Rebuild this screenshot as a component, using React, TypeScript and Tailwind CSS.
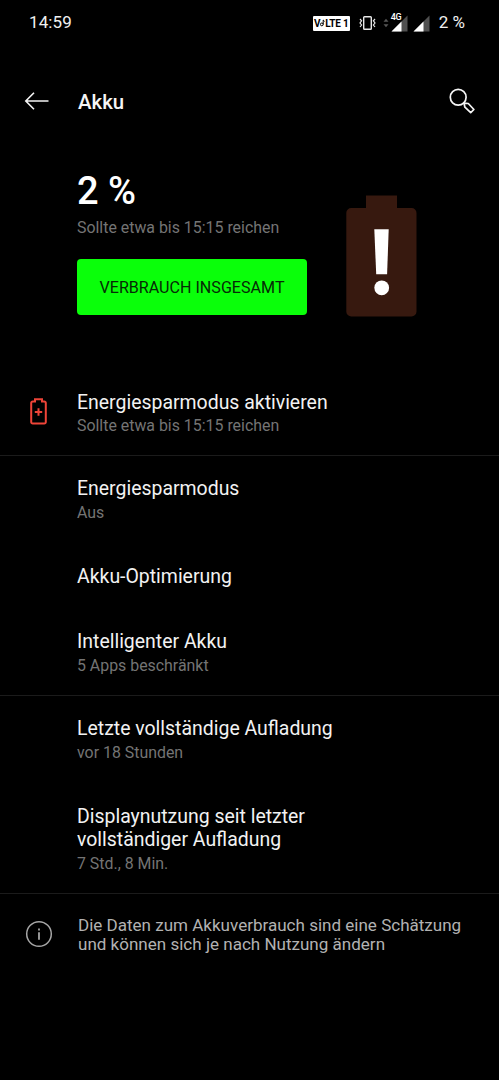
import clsx from "clsx";

interface SettingItem {
  title: string;
  summary?: string;
}

const modeItems: SettingItem[] = [
  { title: "Energiesparmodus", summary: "Aus" },
  { title: "Akku-Optimierung" },
  { title: "Intelligenter Akku", summary: "5 Apps beschränkt" },
];

const usageItems: SettingItem[] = [
  { title: "Letzte vollständige Aufladung", summary: "vor 18 Stunden" },
  {
    title: "Displaynutzung seit letzter vollständiger Aufladung",
    summary: "7 Std., 8 Min.",
  },
];

function StatusBar() {
  return (
    <div className="flex h-[46px] items-center pl-[29px] pr-[34px] text-[17px] text-[#f0f0f0]">
      <span className="tracking-[0.1px]">14:59</span>
      <div className="ml-auto flex items-center">
        <span className="flex h-[15px] w-[37px] items-center justify-center rounded-[1px] bg-white text-[10px] leading-[15px] font-bold tracking-[-0.2px] whitespace-nowrap text-black">
          V
          <svg width="5" height="8" viewBox="0 0 5 8" fill="none" stroke="black" strokeWidth="1">
            <circle cx="1.8" cy="5.4" r="1.4" />
            <path d="M3.2 5.4V1l1.4 1.4" />
          </svg>
          LTE&nbsp;1
        </span>
        <svg className="ml-[9px]" width="17" height="16" viewBox="0 0 17 16" fill="none" stroke="#e8e8e8">
          <rect x="4.7" y="1.7" width="7.6" height="12.6" rx="0.8" strokeWidth="1.4" />
          <path d="M1 4l1.6 1.8L1 8l1.6 2L1 12M16 4l-1.6 1.8L16 8l-1.6 2 1.6 2" strokeWidth="1.2" />
        </svg>
        <svg className="ml-[7px]" width="6" height="10" viewBox="0 0 6 10" fill="#555">
          <path d="M3 0.8l2.5 3h-5zM3 9.2l2.5-3h-5z" />
        </svg>
        <div className="relative ml-[2px]">
          <Signal />
          <span className="absolute -top-[2px] left-0 text-[9px] leading-[9px] font-medium tracking-[-0.3px] text-white">
            4G
          </span>
        </div>
        <div className="ml-[5px]">
          <Signal />
        </div>
        <span className="ml-[9px]">2 %</span>
      </div>
    </div>
  );
}

function Signal() {
  return (
    <svg className="block" width="17" height="17" viewBox="0 0 17 17">
      <path d="M0.5 16.5L16.5 0.5v16z" fill="#505050" />
      <path d="M0.5 16.5l10-10v10z" fill="white" />
    </svg>
  );
}

function BatteryWarning() {
  return (
    <svg className="mt-[13px] ml-[39px] shrink-0" width="71" height="122" viewBox="0 0 71 122">
      <path
        d="M20 0.5h31v12.5h14.5a5 5 0 0 1 5 5v98.5a5 5 0 0 1-5 5H5.3a5 5 0 0 1-5-5V18a5 5 0 0 1 5-5H20z"
        fill="#37190f"
      />
      <path d="M28.3 34.3h14.4l-1.6 45H30.2z" fill="white" />
      <circle cx="35.7" cy="92.8" r="7.4" fill="white" />
    </svg>
  );
}

function SettingRow({ title, summary }: SettingItem) {
  return (
    <div className="pt-[22px] pr-[150px] pb-[20px] pl-[77px] first:pt-[21px] first:pb-[21px]">
      <div className="text-[19.45px] leading-[23px] text-[#f2f2f2]">{title}</div>
      {summary && (
        <div className="mt-[3px] text-[15.9px] leading-[19px] text-[#747474]">{summary}</div>
      )}
    </div>
  );
}

function SettingGroup({ items, className }: { items: SettingItem[]; className?: string }) {
  return (
    <div className={clsx("border-b border-[#1b1b1b]", className)}>
      {items.map((item) => (
        <SettingRow key={item.title} {...item} />
      ))}
    </div>
  );
}

export default function App() {
  return (
    <div className="h-[1080px] w-[499px] overflow-hidden bg-black font-[Roboto,sans-serif]">
      <StatusBar />

      <header className="flex h-[112px] items-center pr-[23px] pl-[24px]">
        <svg className="-mt-[2px]" width="26" height="20" viewBox="0 0 26 20" fill="none" stroke="#f5f5f5" strokeWidth="1.6">
          <path d="M24.5 10H2M10 1.8L1.8 10l8.2 8.2" />
        </svg>
        <h1 className="ml-[28px] text-[20.4px] leading-[24px] font-medium text-[#f5f5f5]">Akku</h1>
        <svg className="ml-auto" width="28" height="28" viewBox="0 0 28 28" fill="none" stroke="#f5f5f5" strokeWidth="1.7">
          <circle cx="10.2" cy="9.2" r="7.9" />
          <path d="M16 15.2l4.3 0.3 5.6 6-3.2 3.2-5.8-5.5z" strokeLinejoin="round" />
        </svg>
      </header>

      <section className="flex h-[212px] pt-[24px] pl-[77px]">
        <div className="w-[230px] shrink-0">
          <div className="h-[36px] text-[38px] leading-[18px] font-medium text-white">2 %</div>
          <div className="text-[15.9px] leading-[19px] text-[#747474]">Sollte etwa bis 15:15 reichen</div>
          <button className="mt-[22px] flex h-[56px] w-[230px] items-center justify-center rounded-[4px] bg-[#0aff0a] pt-[3px] text-[16.1px] text-[#062b06]">
            VERBRAUCH INSGESAMT
          </button>
        </div>
        <BatteryWarning />
      </section>

      <div className="flex h-[86px] border-b border-[#1b1b1b] pt-[21px] pl-[30px]">
        <svg className="mt-[7px]" width="17" height="27" viewBox="0 0 17 27" fill="none" stroke="#ee4438" strokeWidth="2">
          <path d="M5 3.6V1.2h7v2.4h2.3a1.5 1.5 0 0 1 1.5 1.5v19a1.5 1.5 0 0 1-1.5 1.5H2.7a1.5 1.5 0 0 1-1.5-1.5v-19a1.5 1.5 0 0 1 1.5-1.5z" />
          <path d="M8.5 10.3v7.4M4.8 14h7.4" />
        </svg>
        <div className="ml-[30px]">
          <div className="text-[19.45px] leading-[23px] text-[#f2f2f2]">Energiesparmodus aktivieren</div>
          <div className="mt-[2px] text-[15.9px] leading-[19px] text-[#747474]">
            Sollte etwa bis 15:15 reichen
          </div>
        </div>
      </div>

      <SettingGroup items={modeItems} />
      <SettingGroup items={usageItems} />

      <div className="flex pt-[22px] pl-[25px]">
        <svg className="mt-[4px] shrink-0" width="28" height="28" viewBox="0 0 28 28" fill="none" stroke="#a6a6a6">
          <circle cx="14" cy="14" r="12.3" strokeWidth="1.5" />
          <path d="M14 12.3v7.5M14 8.4v2" strokeWidth="1.8" />
        </svg>
        <p className="ml-[25px] w-[395px] text-[17.05px] leading-[19px] text-[#b2b2b2]">
          Die Daten zum Akkuverbrauch sind eine Schätzung und können sich je nach Nutzung ändern
        </p>
      </div>
    </div>
  );
}
